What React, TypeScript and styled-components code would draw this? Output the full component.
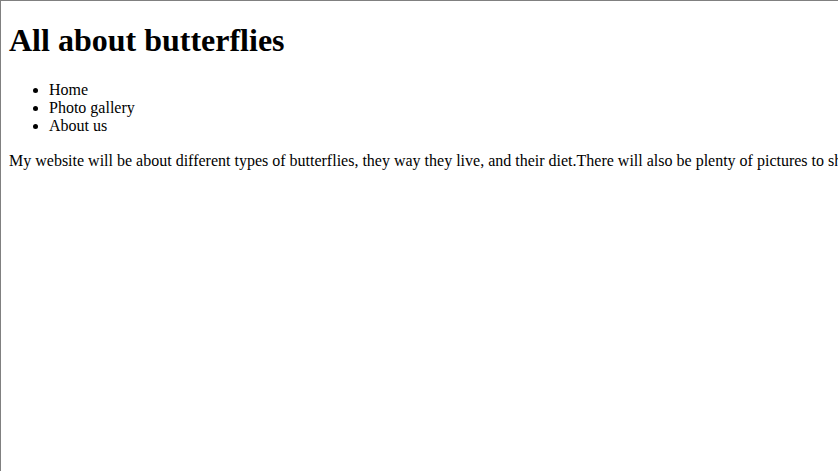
import React from "react";
import styled, { createGlobalStyle } from "styled-components";

const Global = createGlobalStyle`
  html, body { margin: 0; padding: 0; background: #ffffff; }
  body { overflow: hidden; }
`;

const Frame = styled.div`
  position: relative;
  width: 838px;
  height: 471px;
  box-sizing: border-box;
  border-top: 1px solid #808080;
  border-left: 1px solid #808080;
  padding: 0 8px 8px 8px;
  overflow: hidden;
  font-family: "Liberation Serif", "Times New Roman", serif;
  color: #000000;
  display: flow-root;
`;

const EdgeTint = styled.div`
  position: absolute;
  left: -1px;
  top: 364px;
  bottom: 0;
  width: 1px;
  background: #9c8c68;
`;

const Title = styled.h1`
  font-size: 32px;
  font-weight: bold;
  margin: 21px 0 22px 0;
  line-height: 37px;
`;

const NavList = styled.ul`
  margin: 0;
  padding-left: 40px;
  font-size: 16px;
  line-height: 18px;
  list-style: disc;
`;

const NavItem = styled.li``;

const Intro = styled.p`
  margin: 17px 0;
  font-size: 16px;
  line-height: 18px;
  white-space: nowrap;
`;

export default function App() {
  return (
    <>
      <Global />
      <Frame>
        <Title>All about butterflies</Title>
        <NavList>
          <NavItem>Home</NavItem>
          <NavItem>Photo gallery</NavItem>
          <NavItem>About us</NavItem>
        </NavList>
        <Intro>
          My website will be about different types of butterflies, they way they live, and their diet.There will also be plenty of pictures to show what they look like.
        </Intro>
        <EdgeTint />
      </Frame>
    </>
  );
}
